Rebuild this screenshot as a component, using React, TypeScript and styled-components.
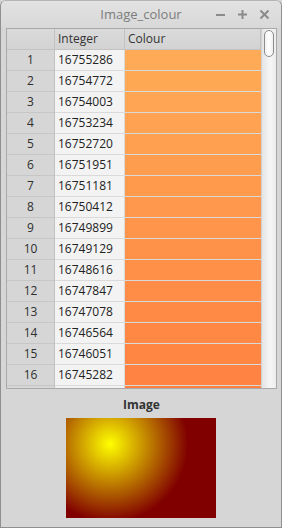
import React from 'react';
import styled, { createGlobalStyle } from 'styled-components';

const GlobalStyle = createGlobalStyle`
  html, body {
    margin: 0;
    padding: 0;
    background: #d6d6d6;
  }
  body {
    font-family: "Open Sans", "Noto Sans", "DejaVu Sans", sans-serif;
  }
`;

// values shown in the table, the colour column is the value as rgb
const values = [
  16755286, 16754772, 16754003, 16753234, 16752720, 16751951, 16751181, 16750412,
  16749899, 16749129, 16748616, 16747847, 16747078, 16746564, 16746051, 16745282,
];
// next row is only a sliver under the fold
const nextValue = 16744513;

const Window = styled.div`
  width: 282px;
  height: 528px;
  box-sizing: border-box;
  border: 1px solid #8f8f8f;
  border-top-color: #b5b5b5;
  border-radius: 6px 6px 0 0;
  background: #d6d6d6;
  display: flex;
  flex-direction: column;
  overflow: hidden;
`;

const TitleBar = styled.div`
  height: 27px;
  flex-shrink: 0;
  position: relative;
  display: flex;
  align-items: center;
  justify-content: center;
  background: linear-gradient(#e2e2e2, #d8d8d8);
`;

const Title = styled.div`
  font-family: "Open Sans", "Noto Sans", sans-serif;
  font-size: 13px;
  color: #7c7c7c;
  margin-top: -1px;
`;

const Controls = styled.div`
  position: absolute;
  right: 11px;
  top: 8px;
  display: flex;
  gap: 11px;
`;

const Body = styled.div`
  flex: 1;
  display: flex;
  flex-direction: column;
  padding: 0 4px 0 5px;
`;

const Table = styled.div`
  height: 361px;
  box-sizing: border-box;
  border: 1px solid #a9a9a9;
  display: flex;
  background: #f3f3f3;
`;

const GridArea = styled.div`
  flex: 1;
  overflow: hidden;
  display: flex;
  flex-direction: column;
`;

const Row = styled.div`
  display: flex;
  flex-shrink: 0;
  height: 21px;
`;

const Corner = styled.div`
  width: 48px;
  box-sizing: border-box;
  border-right: 1px solid #c2c2c2;
  border-bottom: 1px solid #c2c2c2;
  background: linear-gradient(#dadada, #d3d3d3);
`;

const HeadCell = styled.div<{ $w?: number }>`
  ${(p) => (p.$w ? `width: ${p.$w}px;` : 'flex: 1;')}
  box-sizing: border-box;
  border-right: 1px solid #c2c2c2;
  border-bottom: 1px solid #c2c2c2;
  background: linear-gradient(#dadada, #d3d3d3);
  font-size: 12px;
  color: #333;
  padding-left: 3px;
  line-height: 20px;
`;

const RowHead = styled.div`
  width: 48px;
  box-sizing: border-box;
  border-right: 1px solid #c2c2c2;
  border-bottom: 1px solid #c6c6c6;
  background: #d6d6d6;
  font-size: 12px;
  color: #2e2e2e;
  text-align: center;
  line-height: 20px;
`;

const IntCell = styled.div`
  width: 70px;
  box-sizing: border-box;
  border-right: 1px solid #dadada;
  border-bottom: 1px solid #dadada;
  background: #f3f3f3;
  font-size: 12px;
  color: #222;
  padding-left: 3px;
  line-height: 20px;
`;

const ColourCell = styled.div<{ $c: string }>`
  flex: 1;
  box-sizing: border-box;
  border-bottom: 1px solid #d9d9d9;
  background: ${(p) => p.$c};
`;

const ScrollTrack = styled.div`
  width: 15px;
  flex-shrink: 0;
  box-sizing: border-box;
  border-left: 1px solid #d0d0d0;
  background: linear-gradient(90deg, #e4e4e4, #f6f6f6 60%, #ececec);
  padding: 1px 2px 0 2px;
`;

const Handle = styled.div`
  height: 27px;
  box-sizing: border-box;
  border: 1px solid #8c8c8c;
  border-radius: 5px;
  background: linear-gradient(90deg, #f2f2f2, #ffffff 50%, #eeeeee);
`;

const Caption = styled.div`
  font-size: 12px;
  font-weight: bold;
  color: #333;
  text-align: center;
  margin-top: 8px;
  line-height: 16px;
`;

const Picture = styled.div`
  width: 150px;
  height: 100px;
  margin: 5px 0 0 60px;
  background: radial-gradient(circle 78px at 44px 26px, #ffff00, #800000);
`;

const WinButton = ({ kind }: { kind: 'min' | 'max' | 'close' }) => (
  <svg width="11" height="11" viewBox="0 0 11 11">
    {kind === 'min' && <line x1="1" y1="6" x2="10" y2="6" stroke="#8a8a8a" strokeWidth="2" />}
    {kind === 'max' && (
      <g stroke="#8a8a8a" strokeWidth="2">
        <line x1="1" y1="5.5" x2="10" y2="5.5" />
        <line x1="5.5" y1="1" x2="5.5" y2="10" />
      </g>
    )}
    {kind === 'close' && (
      <g stroke="#8a8a8a" strokeWidth="2">
        <line x1="1.5" y1="1.5" x2="9.5" y2="9.5" />
        <line x1="9.5" y1="1.5" x2="1.5" y2="9.5" />
      </g>
    )}
  </svg>
);

const App: React.FC = () => {
  return (
    <>
      <GlobalStyle />
      <Window>
        <TitleBar>
          <Title>Image_colour</Title>
          <Controls>
            <WinButton kind="min" />
            <WinButton kind="max" />
            <WinButton kind="close" />
          </Controls>
        </TitleBar>
        <Body>
          <Table>
            <GridArea>
              <Row>
                <Corner />
                <HeadCell $w={70}>Integer</HeadCell>
                <HeadCell>Colour</HeadCell>
              </Row>
              {values.map((v, i) => (
                <Row key={i}>
                  <RowHead>{i + 1}</RowHead>
                  <IntCell>{v}</IntCell>
                  <ColourCell $c={'#' + v.toString(16)} />
                </Row>
              ))}
              <Row>
                <RowHead />
                <IntCell />
                <ColourCell $c={'#' + nextValue.toString(16)} />
              </Row>
            </GridArea>
            <ScrollTrack>
              <Handle />
            </ScrollTrack>
          </Table>
          <Caption>Image</Caption>
          <Picture />
        </Body>
      </Window>
    </>
  );
};

export default App;
